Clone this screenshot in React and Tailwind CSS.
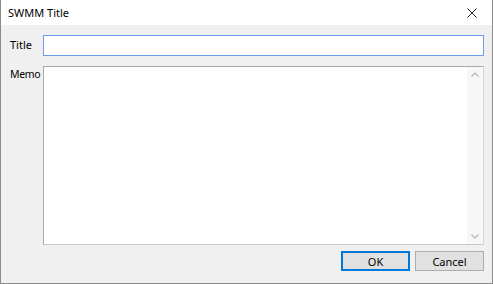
export default function App() {
  return (
    <div
      className="flex h-[284px] w-[493px] flex-col border border-t-0 border-[#8c8c8c] bg-[#f0f0f0] text-[11px] text-black"
      style={{ fontFamily: '"Noto Sans", "Open Sans", sans-serif' }}
    >
      <div className="flex h-[25px] items-center justify-between bg-white pl-[7px] pr-[15px]">
        <span className="leading-none">SWMM Title</span>
        <svg width="10" height="10" viewBox="0 0 10 10" className="text-[#222]">
          <path d="M0.5 0.5 L9.5 9.5 M9.5 0.5 L0.5 9.5" stroke="currentColor" strokeWidth="1" />
        </svg>
      </div>
      <div className="flex flex-1 flex-col pl-[9px] pr-[8px] pt-[10px]">
        <div className="flex items-center">
          <span className="w-[33px] shrink-0 pb-[2px] leading-none">Title</span>
          <div className="h-[21px] flex-1 border border-[#6f9be6] bg-white" />
        </div>
        <div className="mt-[10px] flex">
          <span className="w-[33px] shrink-0 pt-[3px] text-[10.5px] leading-none tracking-[-0.3px]">Memo</span>
          <div className="flex h-[179px] flex-1 border border-[#a8a8a8] border-r-[#d6d6d6] border-b-[#c8c8c8] bg-white">
            <div className="flex-1" />
            <div className="flex w-[16px] flex-col items-center justify-between bg-[#f7f7f7] py-[5px]">
              <svg width="8" height="5" viewBox="0 0 8 5">
                <path d="M0.5 4.5 L4 1 L7.5 4.5" fill="none" stroke="#b5b5b5" strokeWidth="1.2" />
              </svg>
              <svg width="8" height="5" viewBox="0 0 8 5">
                <path d="M0.5 0.5 L4 4 L7.5 0.5" fill="none" stroke="#b5b5b5" strokeWidth="1.2" />
              </svg>
            </div>
          </div>
        </div>
        <div className="mt-[6px] flex justify-end gap-[5px]">
          <button className="h-[20px] w-[69px] border-2 border-[#0078d7] bg-[#e1e1e1] leading-none">
            OK
          </button>
          <button className="h-[20px] w-[69px] border border-[#adadad] bg-[#e1e1e1] leading-none">
            Cancel
          </button>
        </div>
      </div>
    </div>
  )
}
